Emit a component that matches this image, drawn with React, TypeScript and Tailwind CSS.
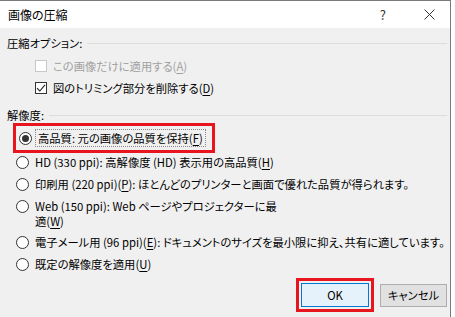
import React from 'react';

const font = "[font-family:'Noto_Sans_CJK_JP','Noto_Sans',sans-serif] [font-feature-settings:'palt']";

function Key({ k }: { k: string }) {
  return (
    <>
      (<span className="underline underline-offset-2">{k}</span>)
    </>
  );
}

function Radio({ checked = false }: { checked?: boolean }) {
  return (
    <span className="flex h-[13px] w-[13px] shrink-0 items-center justify-center rounded-full border border-[#333] bg-white">
      {checked && <span className="h-[7px] w-[7px] rounded-full bg-[#333]" />}
    </span>
  );
}

function Checkbox({ checked = false, disabled = false }: { checked?: boolean; disabled?: boolean }) {
  return (
    <span
      className={`flex h-[12px] w-[12px] shrink-0 items-center justify-center border bg-white ${
        disabled ? 'border-[#c8c8c8]' : 'border-[#333]'
      }`}
    >
      {checked && (
        <svg width="10" height="10" viewBox="0 0 10 10" fill="none">
          <path d="M1 5.2 L3.8 8 L9 1.8" stroke="#222" strokeWidth="1.1" />
        </svg>
      )}
    </span>
  );
}

function Heading({ label }: { label: string }) {
  return (
    <div className="flex h-[16px] items-center pl-[7px] pr-[3px]">
      <span className="shrink-0">{label}</span>
      <span className="ml-[5px] h-px flex-1 bg-[#dcdcdc]" />
    </div>
  );
}

export default function App() {
  return (
    <div className={`h-[317px] w-[455px] whitespace-nowrap bg-white text-[11.3px] leading-[16px] text-black ${font}`}>
      <div className="flex h-[317px] w-[451px] flex-col border-t border-r border-[#7a7a7a]">
        {/* title bar */}
        <div className="flex h-[27px] items-center bg-white pl-[8px]">
          <span className="flex-1 text-[12px]">画像の圧縮</span>
          <span className="mr-[38px] text-[13px] text-[#333]">?</span>
          <svg className="mr-[15px]" width="11" height="11" viewBox="0 0 11 11">
            <path d="M0.5 0.5 L10.5 10.5 M10.5 0.5 L0.5 10.5" stroke="#333" strokeWidth="1" />
          </svg>
        </div>

        <div className="flex flex-1 flex-col bg-[#f0f0f0]">
          <div className="mt-[7px]">
            <Heading label="圧縮オプション:" />
          </div>
          <div className="mt-[4px] flex h-[22px] items-center gap-[6px] pl-[35px] text-[#a0a0a0]">
            <Checkbox disabled />
            <span>
              この画像だけに適用する<Key k="A" />
            </span>
          </div>
          <div className="flex h-[22px] items-center gap-[6px] pl-[35px]">
            <Checkbox checked />
            <span>
              図のトリミング部分を削除する<Key k="D" />
            </span>
          </div>

          <div className="mt-[8px]">
            <Heading label="解像度:" />
          </div>

          <div className="ml-[13px] flex h-[30px] w-[202px] items-center border-[3px] border-[#e8141e]">
            <div className="ml-[3px]">
              <Radio checked />
            </div>
            <span className="ml-[3px] border border-dotted border-[#888] px-[2px] leading-[16px]">
              高品質: 元の画像の品質を保持<Key k="F" />
            </span>
          </div>

          <div className="-mt-[2px] flex h-[22px] items-center gap-[6px] pl-[16px]">
            <Radio />
            <span>
              HD (330 ppi): 高解像度 (HD) 表示用の高品質<Key k="H" />
            </span>
          </div>
          <div className="flex h-[22px] items-center gap-[6px] pl-[16px]">
            <Radio />
            <span>
              印刷用 (220 ppi)<Key k="P" />: ほとんどのプリンターと画面で優れた品質が得られます。
            </span>
          </div>
          <div className="flex items-start gap-[6px] pl-[16px] pt-[4px] leading-[15px]">
            <div className="mt-[1px]">
              <Radio />
            </div>
            <span>
              Web (150 ppi): Web ページやプロジェクターに最
              <br />
              適<Key k="W" />
            </span>
          </div>
          <div className="mt-[2px] flex h-[22px] items-center gap-[6px] pl-[16px]">
            <Radio />
            <span>
              電子メール用 (96 ppi)<Key k="E" />: ドキュメントのサイズを最小限に抑え、共有に適しています。
            </span>
          </div>
          <div className="flex h-[22px] items-center gap-[6px] pl-[16px]">
            <Radio />
            <span>
              既定の解像度を適用<Key k="U" />
            </span>
          </div>

          <div className="mt-[3px] flex items-center justify-end pr-[3px]">
            <div className="border-[3px] border-[#e8141e] p-[2px]">
              <button className="flex h-[24px] w-[68px] items-center justify-center border border-[#0078d7] bg-[#e5f1fb]">
                OK
              </button>
            </div>
            <button className="ml-[6px] flex h-[23px] w-[67px] items-center justify-center border border-[#adadad] bg-[#e1e1e1]">
              キャンセル
            </button>
          </div>
        </div>
      </div>
    </div>
  );
}
